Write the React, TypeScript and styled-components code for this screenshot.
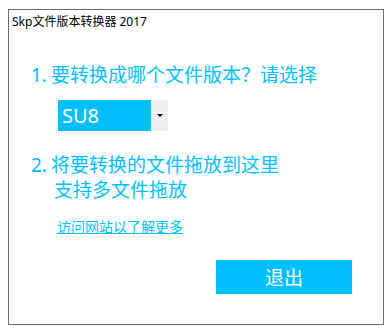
import styled, { createGlobalStyle } from 'styled-components';

const GlobalStyle = createGlobalStyle`
  html, body {
    margin: 0;
    padding: 0;
    background: #ffffff;
  }
  body {
    font-family: "Noto Sans", "Noto Sans CJK SC", sans-serif;
  }
`;

const accent = '#00bfff';

const Window = styled.div`
  box-sizing: border-box;
  width: 376px;
  height: 316px;
  margin: 9px 0 0 8px;
  border: 1px solid #6a6a6a;
  background: #ffffff;
  display: flex;
  flex-direction: column;
`;

const TitleBar = styled.div`
  padding: 4px 0 0 3px;
  font-size: 12px;
  line-height: 16px;
  color: #000000;
`;

const Body = styled.div`
  display: flex;
  flex-direction: column;
  padding-left: 22px;
`;

const Step = styled.div<{ $top: number }>`
  display: flex;
  margin-top: ${p => p.$top}px;
  font-size: 19px;
  line-height: 25px;
  color: ${accent};
`;

const StepNo = styled.span`
  width: 20px;
  flex: none;
`;

const StepText = styled.div`
  display: flex;
  flex-direction: column;
`;

const StepLine = styled.span<{ $indent?: number }>`
  padding-left: ${p => p.$indent ?? 0}px;
`;

const Select = styled.div`
  display: flex;
  margin: 12px 0 0 27px;
  width: 110px;
  height: 31px;
`;

const SelectValue = styled.div`
  flex: 1;
  background: ${accent};
  color: #ffffff;
  font-size: 20px;
  line-height: 31px;
  padding-left: 4px;
`;

const SelectArrow = styled.div`
  width: 17px;
  background: #efefef;
  display: flex;
  align-items: center;
  justify-content: center;

  &::after {
    content: '';
    border-left: 3px solid transparent;
    border-right: 3px solid transparent;
    border-top: 3px solid #000000;
  }
`;

const MoreLink = styled.a`
  align-self: flex-start;
  margin: 15px 0 0 26px;
  font-size: 14px;
  line-height: 18px;
  color: ${accent};
  text-decoration: underline;
  cursor: pointer;
`;

const Footer = styled.div`
  display: flex;
  justify-content: flex-end;
  padding-right: 31px;
  margin-top: 24px;
`;

const ExitButton = styled.button`
  width: 136px;
  height: 34px;
  border: none;
  background: ${accent};
  color: #ffffff;
  font-family: inherit;
  font-size: 19px;
  cursor: pointer;
  padding: 0;
`;

export default function App() {
  return (
    <>
      <GlobalStyle />
      <Window>
        <TitleBar>Skp文件版本转换器 2017</TitleBar>
        <Body>
          <Step $top={33}>
            <StepNo>1.</StepNo>
            <StepText>
              <StepLine>要转换成哪个文件版本？请选择</StepLine>
            </StepText>
          </Step>
          <Select>
            <SelectValue>SU8</SelectValue>
            <SelectArrow />
          </Select>
          <Step $top={22}>
            <StepNo>2.</StepNo>
            <StepText>
              <StepLine>将要转换的文件拖放到这里</StepLine>
              <StepLine $indent={3}>支持多文件拖放</StepLine>
            </StepText>
          </Step>
          <MoreLink>访问网站以了解更多</MoreLink>
        </Body>
        <Footer>
          <ExitButton>退出</ExitButton>
        </Footer>
      </Window>
    </>
  );
}
